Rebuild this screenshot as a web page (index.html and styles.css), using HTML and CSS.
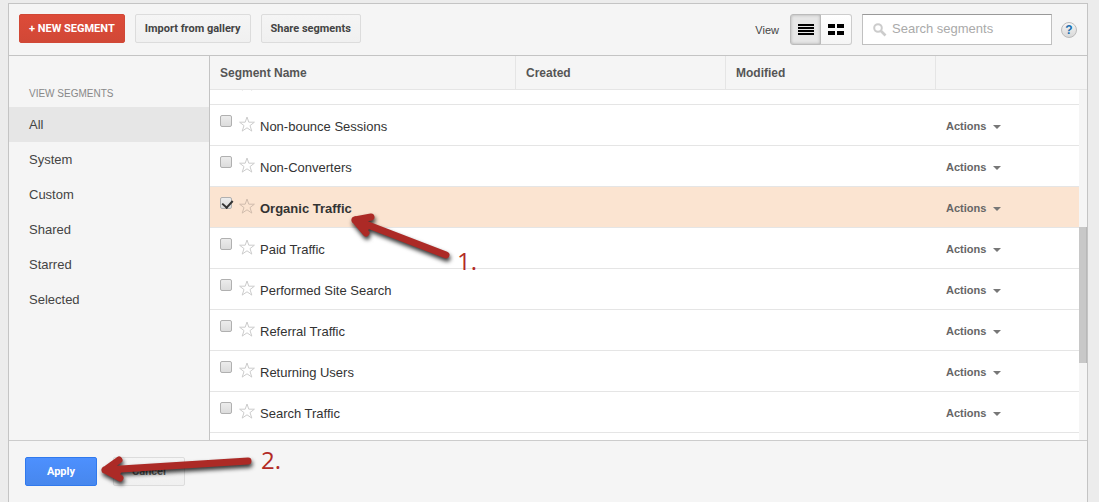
FILE: index.html
```html
<!DOCTYPE html>
<html lang="en">
<head>
<meta charset="utf-8">
<title>Segments</title>
<link rel="stylesheet" href="styles.css">
</head>
<body>
<svg class="defs" aria-hidden="true">
  <symbol id="star" viewBox="0 0 16 16"><path d="M8 1 9.8 6.2H15.4L11 9.6 12.8 15.1 8 11.8 3.2 15.1 5 9.6 0.6 6.2H6.2Z" fill="none" stroke="currentColor"/></symbol>
</svg>
<main class="panel">
  <header class="toolbar">
    <button class="btn btn-new" type="button">+ NEW SEGMENT</button>
    <button class="btn" type="button">Import from gallery</button>
    <button class="btn" type="button">Share segments</button>
    <div class="tools">
      <span class="view-label">View</span>
      <div class="toggle">
        <button class="toggle-btn is-on" type="button" aria-label="List view"><svg width="16" height="12" viewBox="0 0 16 12"><path d="M0 1h16M0 4h16M0 7h16M0 10h16" stroke="#000" stroke-width="2"/></svg></button>
        <button class="toggle-btn" type="button" aria-label="Grid view"><svg width="16" height="12" viewBox="0 0 16 12"><path d="M0 0h7v4H0zM9 0h7v4H9zM0 7h7v4H0zM9 7h7v4H9z"/></svg></button>
      </div>
      <div class="search">
        <svg width="14" height="14" viewBox="0 0 14 14" aria-hidden="true"><circle cx="5" cy="5" r="3.8" fill="none" stroke="#ccc" stroke-width="2"/><path d="M8 8l4.5 4.5" stroke="#ccc" stroke-width="2.6"/></svg>
        <input type="text" placeholder="Search segments" aria-label="Search segments">
      </div>
      <button class="help" type="button" aria-label="Help">?</button>
    </div>
  </header>
  <div class="content">
    <nav class="sidebar">
      <h2 class="sidebar-title">VIEW SEGMENTS</h2>
      <a class="nav-item is-current" href="#all">All</a>
      <a class="nav-item" href="#system">System</a>
      <a class="nav-item" href="#custom">Custom</a>
      <a class="nav-item" href="#shared">Shared</a>
      <a class="nav-item" href="#starred">Starred</a>
      <a class="nav-item" href="#selected">Selected</a>
    </nav>
    <table class="segments">
      <thead><tr class="row head"><th>Segment Name</th><th>Created</th><th>Modified</th><th></th></tr></thead>
      <tbody>
        <tr class="row scrolled"><td class="name"><svg class="star"><use href="#star"/></svg></td></tr>
        <tr class="row"><td class="name"><input type="checkbox" id="s1"><svg class="star"><use href="#star"/></svg><label for="s1">Non-bounce Sessions</label></td><td></td><td></td><td><button class="actions" type="button">Actions</button></td></tr>
        <tr class="row"><td class="name"><input type="checkbox" id="s2"><svg class="star"><use href="#star"/></svg><label for="s2">Non-Converters</label></td><td></td><td></td><td><button class="actions" type="button">Actions</button></td></tr>
        <tr class="row is-selected"><td class="name"><input type="checkbox" id="s3" checked><svg class="star"><use href="#star"/></svg><label for="s3">Organic Traffic</label></td><td></td><td></td><td><button class="actions" type="button">Actions</button></td></tr>
        <tr class="row"><td class="name"><input type="checkbox" id="s4"><svg class="star"><use href="#star"/></svg><label for="s4">Paid Traffic</label></td><td></td><td></td><td><button class="actions" type="button">Actions</button></td></tr>
        <tr class="row"><td class="name"><input type="checkbox" id="s5"><svg class="star"><use href="#star"/></svg><label for="s5">Performed Site Search</label></td><td></td><td></td><td><button class="actions" type="button">Actions</button></td></tr>
        <tr class="row"><td class="name"><input type="checkbox" id="s6"><svg class="star"><use href="#star"/></svg><label for="s6">Referral Traffic</label></td><td></td><td></td><td><button class="actions" type="button">Actions</button></td></tr>
        <tr class="row"><td class="name"><input type="checkbox" id="s7"><svg class="star"><use href="#star"/></svg><label for="s7">Returning Users</label></td><td></td><td></td><td><button class="actions" type="button">Actions</button></td></tr>
        <tr class="row"><td class="name"><input type="checkbox" id="s8"><svg class="star"><use href="#star"/></svg><label for="s8">Search Traffic</label></td><td></td><td></td><td><button class="actions" type="button">Actions</button></td></tr>
      </tbody>
    </table>
    <div class="scrollbar"><div class="thumb"></div></div>
  </div>
  <footer class="footer">
    <button class="btn btn-apply" type="button">Apply</button>
    <button class="btn btn-cancel" type="button">Cancel</button>
  </footer>
</main>
<svg class="notes" width="500" height="502" viewBox="0 0 500 502">
  <g class="arrow">
    <path d="M446 255 355 220M355 220 371 217M355 220 366 233M360 221 368 226"/>
    <path d="M248 461 105 470M105 470 119 460M105 470 120 478M110 470 118 471"/>
  </g>
  <text x="457" y="270">1.</text>
  <text x="261" y="469">2.</text>
</svg>
</body>
</html>
```
FILE: styles.css
```css
* { box-sizing: border-box; }
body {
  margin: 0;
  height: 100vh;
  padding: 3px 11px 0 8px;
  background: #ececec;
  color: #444;
  font: 13px/16px "Liberation Sans", Arial, sans-serif;
  overflow: hidden;
}
button, input { font: inherit; margin: 0; }
.defs { position: absolute; width: 0; height: 0; }
.panel {
  display: flex;
  flex-direction: column;
  height: 100%;
  border: 1px solid #c4c4c4;
  border-bottom: 0;
  background: #f5f5f5;
}
.toolbar {
  display: flex;
  align-items: flex-start;
  gap: 10px;
  height: 52px;
  padding: 10px;
  border-bottom: 1px solid #c4c4c4;
}
.btn {
  height: 29px;
  padding: 0 9px;
  border: 1px solid #dcdcdc;
  border-radius: 2px;
  background: linear-gradient(#f5f5f5, #f0f0f0);
  color: #444;
  font: bold 11px/27px Roboto, sans-serif;
  white-space: nowrap;
}
.btn-new {
  border-color: #d14836;
  background: linear-gradient(#dd4b39, #d14836);
  color: #fff;
}
.tools { display: flex; align-items: center; margin-left: auto; height: 31px; }
.view-label { margin-right: 11px; font-size: 11px; }
.toggle { display: flex; margin-right: 10px; }
.toggle-btn {
  display: grid;
  place-items: center;
  width: 31px;
  height: 31px;
  padding: 0;
  border: 1px solid #ccc;
  border-left: 0;
  border-radius: 0 3px 3px 0;
  background: linear-gradient(#fff, #f5f5f5);
}
.toggle-btn.is-on {
  border: 1px solid #bbb;
  border-radius: 3px 0 0 3px;
  background: #e6e6e6;
  box-shadow: inset 0 0 3px #aaa;
}
.search {
  display: flex;
  align-items: center;
  gap: 5px;
  width: 190px;
  height: 31px;
  padding-left: 10px;
  border: 1px solid #c0c0c0;
  border-top-color: #999;
  background: #fff;
}
.search input {
  flex: 1;
  min-width: 0;
  padding: 0 0 2px;
  border: 0;
  outline: 0;
  background: none;
}
.search input::placeholder { color: #aaa; opacity: 1; }
.help {
  width: 16px;
  height: 16px;
  margin-left: 9px;
  padding: 0;
  border: 1px solid #bbb;
  border-radius: 50%;
  background: linear-gradient(#f5f5f5, #d8d8d8);
  color: #1a6fb0;
  font-size: 12px;
  font-weight: bold;
  line-height: 14px;
}
.content { display: flex; flex: 1; min-height: 0; position: relative; }
.sidebar { flex: 0 0 201px; border-right: 1px solid #c4c4c4; }
.sidebar-title {
  margin: 0;
  padding: 30px 20px 5px;
  color: #888;
  font-size: 10px;
  font-weight: normal;
}
.nav-item {
  display: block;
  padding-left: 20px;
  color: #444;
  line-height: 35px;
  text-decoration: none;
}
.nav-item.is-current { background: #e6e6e6; }
.segments { display: flex; flex: 1; flex-direction: column; min-width: 0; background: #fff; }
.segments thead { display: block; }
.segments tbody { display: block; flex: 1; min-height: 0; overflow: hidden; }
.row {
  display: grid;
  grid-template-columns: 306fr 210fr 210fr 143fr;
  height: 41px;
  margin-right: 8px;
  border-bottom: 1px solid #e5e5e5;
}
.row.head { height: 34px; margin-right: 0; padding-right: 8px; background: #f5f5f5; }
.row.scrolled { margin-top: -26px; }
.row.is-selected { background: #fbe4d1; }
th {
  padding: 0 10px;
  border-right: 1px solid #e5e5e5;
  color: #555;
  font-size: 12px;
  line-height: 34px;
  text-align: left;
}
th:last-child { border-right: 0; }
td { padding: 0 10px; }
.name { display: flex; align-items: flex-start; color: #333; }
.name label { padding: 14px 0 0 5px; white-space: nowrap; }
.is-selected label { font-weight: bold; }
.star { width: 16px; height: 16px; margin: 11px 0 0 7px; color: #ccc; }
.scrolled .star { margin-left: 19px; }
.is-selected .star { color: #d0bcad; }
.name input {
  appearance: none;
  width: 12px;
  height: 12px;
  margin-top: 10px;
  border: 1px solid #b0b0b0;
  border-radius: 2px;
  background: linear-gradient(#ececec, #dcdcdc);
}
.name input:checked { position: relative; }
.name input:checked::after {
  content: "";
  position: absolute;
  left: 3px;
  top: 0;
  width: 5px;
  height: 8px;
  border: solid #333;
  border-width: 0 2px 2px 0;
  transform: rotate(42deg);
}
.actions {
  display: flex;
  align-items: center;
  gap: 7px;
  height: 16px;
  margin-top: 13px;
  padding: 0;
  border: 0;
  background: none;
  color: #666;
  font-size: 11px;
  font-weight: bold;
}
.actions::after {
  content: "";
  margin-top: 2px;
  border: 4px solid transparent;
  border-top-color: #777;
  border-bottom: 0;
}
.scrollbar { position: absolute; top: 34px; right: 0; bottom: 0; width: 8px; background: #f5f5f5; }
.thumb { height: 39%; margin-top: 1710%; background: #c8c8c8; border-right: 1px solid #b8b8b8; }
.footer {
  display: flex;
  gap: 16px;
  height: 62px;
  padding: 16px;
  border-top: 1px solid #ccc;
}
.btn-apply, .btn-cancel { width: 72px; }
.btn-cancel { color: #666; }
.btn-apply {
  border-color: #3079ed;
  background: linear-gradient(#4d90fe, #4787ed);
  color: #fff;
}
.notes {
  position: absolute;
  left: 0;
  top: 0;
  pointer-events: none;
  fill: #b22a26;
  font: 24px "Open Sans", sans-serif;
}
.arrow {
  fill: none;
  stroke: #ac2a26;
  stroke-width: 7;
  stroke-linecap: round;
  stroke-linejoin: round;
  filter: drop-shadow(1px 3px 2px rgba(0, 0, 0, 0.8));
}
```
